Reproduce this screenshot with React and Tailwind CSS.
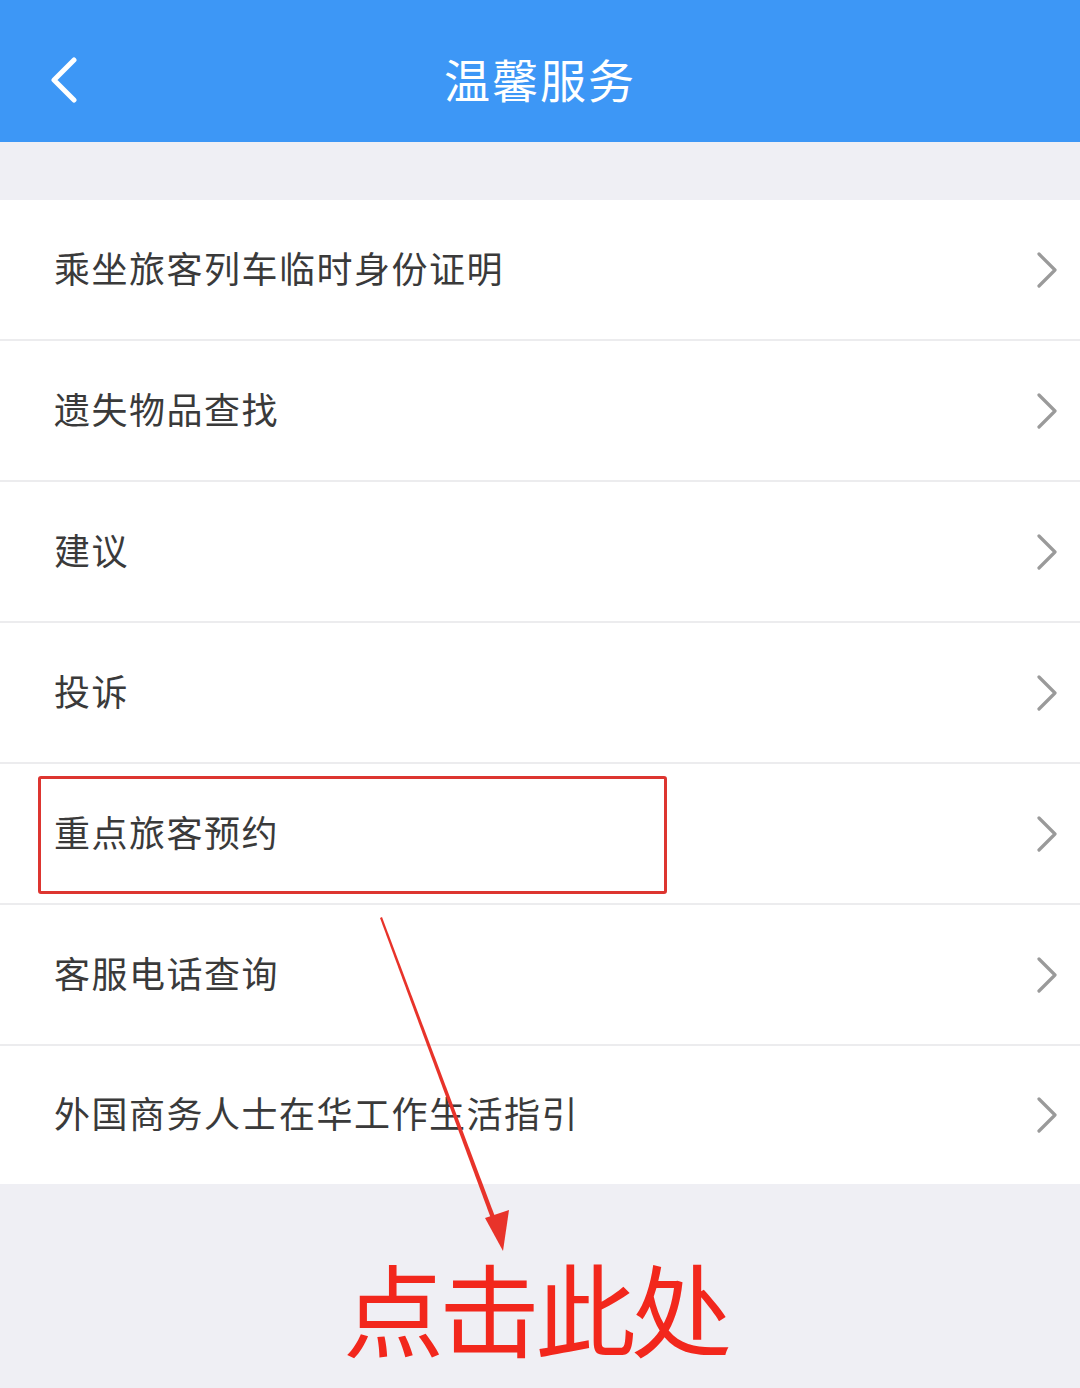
import React from 'react';

const ITEMS = [
  '乘坐旅客列车临时身份证明',
  '遗失物品查找',
  '建议',
  '投诉',
  '重点旅客预约',
  '客服电话查询',
  '外国商务人士在华工作生活指引',
];

const FONT = { fontFamily: '"Noto Sans CJK SC", "Noto Sans", sans-serif' };

function Chevron() {
  return (
    <svg width="22" height="36" viewBox="0 0 22 36" className="shrink-0">
      <path d="M3 2 L19 18 L3 34" fill="none" stroke="#9a9a9a" strokeWidth="3.2" strokeLinecap="round" strokeLinejoin="round" />
    </svg>
  );
}

export default function App() {
  return (
    <div className="relative w-[1080px] h-[1388px] bg-[#efeff4] overflow-hidden" style={FONT}>
      {/* Header */}
      <div className="relative h-[142px] bg-[#3d97f6] flex items-center justify-center">
        <svg width="32" height="46" viewBox="0 0 32 46" className="absolute left-[48px] top-[57px]">
          <path d="M26 3 L6 23 L26 43" fill="none" stroke="#fff" strokeWidth="5" strokeLinecap="round" strokeLinejoin="round" />
        </svg>
        <h1 className="text-white text-[46px] tracking-[2px] leading-none pt-[14px]">温馨服务</h1>
      </div>

      {/* List */}
      <div className="mt-[58px] bg-white">
        {ITEMS.map((label, i) => (
          <div
            key={label}
            className={`relative flex items-center justify-between pl-[54px] pr-[22px] ${i < ITEMS.length - 1 ? 'h-[141px] border-b-2 border-[#ececee]' : 'h-[138px]'}`}
          >
            <span className="text-[36px] text-[#3a3a3a] tracking-[1.5px] leading-none pb-[6px]">{label}</span>
            <Chevron />
            {i === 4 && (
              <div className="absolute left-[38px] top-[12px] w-[629px] h-[118px] border-[3px] border-[#dd3530] rounded-[3px]" />
            )}
          </div>
        ))}
      </div>

      {/* Bottom hint */}
      <div className="flex justify-center pt-[72px] pr-[10px]">
        <span className="text-[101px] text-[#f2271c] font-normal leading-none tracking-[-5px]">点击此处</span>
      </div>

      {/* Arrow */}
      <svg className="absolute left-0 top-0 pointer-events-none" width="1080" height="1388">
        <polygon points="380,918 382,917 497,1222 493,1224" fill="#e8332a" />
        <polygon points="503,1251 485,1218 509,1210" fill="#e8332a" />
      </svg>
    </div>
  );
}
